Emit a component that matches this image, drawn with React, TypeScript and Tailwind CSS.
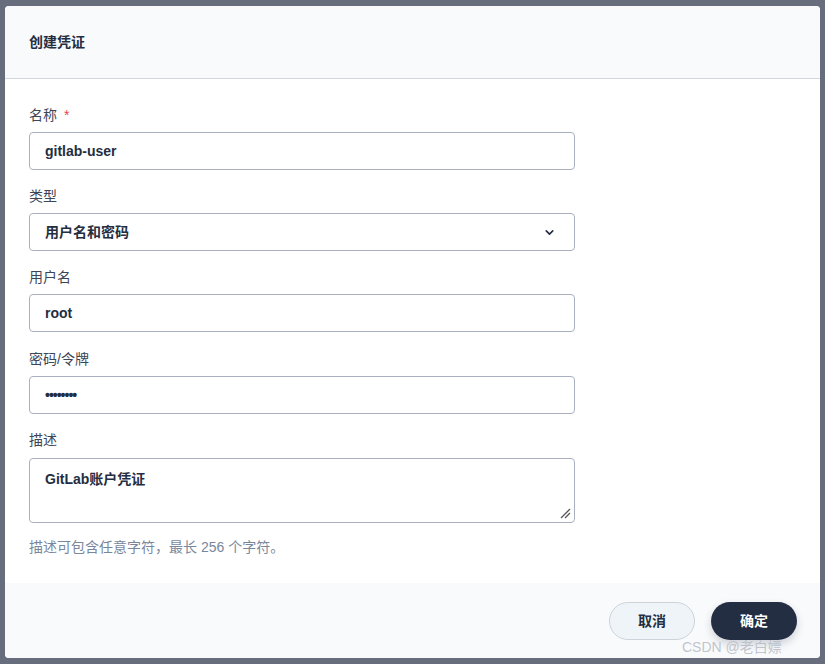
import React from 'react';

const FONT = { fontFamily: '"Liberation Sans", "Noto Sans CJK SC", sans-serif' };

const Field: React.FC<{ label: string; required?: boolean; children: React.ReactNode }> = ({
  label,
  required,
  children,
}) => (
  <div className="flex flex-col">
    <label className="h-[18px] leading-[18px] flex items-center text-[14px] text-[#3d4657] mb-[8px]">
      {label}
      {required && <span className="ml-[7px] text-[#e5484d]">*</span>}
    </label>
    {children}
  </div>
);

const inputCls =
  'h-[38px] w-[546px] rounded-[4px] border border-[#a9b1c0] bg-white px-[15px] text-[14px] font-bold text-[#242e42] flex items-center';

export default function App() {
  return (
    <div className="w-[825px] h-[664px] bg-[#676d7c] relative overflow-hidden" style={FONT}>
      <div className="absolute left-[5px] top-[6px] w-[815px] h-[652px] bg-white rounded-[4px] flex flex-col overflow-hidden">
        {/* header */}
        <div className="h-[73px] shrink-0 bg-[#f9fafc] border-b border-[#d3d8e0] flex items-center px-[24px]">
          <span className="text-[14px] font-bold text-[#242e42]">创建凭证</span>
        </div>

        {/* body */}
        <div className="flex-1 px-[24px] pt-[27px] flex flex-col gap-[17px]">
          <Field label="名称" required>
            <div className={inputCls}>gitlab-user</div>
          </Field>
          <Field label="类型">
            <div className={`${inputCls} justify-between pr-[18px]`}>
              <span>用户名和密码</span>
              <svg width="13" height="13" viewBox="0 0 24 24" fill="none" stroke="#242e42" strokeWidth={3} strokeLinecap="round" strokeLinejoin="round">
                <path d="M6 9l6 6 6-6" />
              </svg>
            </div>
          </Field>
          <Field label="用户名">
            <div className={`${inputCls} mb-[1px]`}>root</div>
          </Field>
          <Field label="密码/令牌">
            <div className={`${inputCls} tracking-[-1px] text-[11px]`}>••••••••</div>
          </Field>
          <div className="flex flex-col">
            <label className="h-[18px] leading-[18px] flex items-center text-[14px] text-[#3d4657] mb-[9px]">描述</label>
            <div className="relative h-[65px] w-[546px] rounded-[4px] border border-[#a9b1c0] bg-white px-[15px] pt-[10px] text-[14px] font-bold text-[#242e42]">
              GitLab账户凭证
              <svg className="absolute right-[3px] bottom-[3px]" width="11" height="11" viewBox="0 0 11 11" stroke="#555" strokeWidth={1.3}>
                <path d="M1 10L10 1M5 10L10 5" />
              </svg>
            </div>
            <p className="mt-[15px] leading-[18px] text-[14px] text-[#79879c]">描述可包含任意字符，最长 256 个字符。</p>
          </div>
        </div>

        {/* footer */}
        <div className="h-[75px] shrink-0 bg-[#f9fafc] flex items-center justify-end gap-[16px] pr-[23px] pt-[1px]">
          <button className="w-[86px] h-[38px] rounded-full border border-[#ccd3db] bg-[#eff4f9] text-[14px] font-bold text-[#242e42]">
            取消
          </button>
          <button className="w-[86px] h-[38px] rounded-full bg-[#242e42] text-[14px] font-bold text-white shadow-[0_4px_8px_rgba(36,46,66,0.2)]">
            确定
          </button>
        </div>
      </div>
      <span className="absolute left-[682px] top-[637px] text-[14px] text-[#b9bdc6]/90">CSDN @老白嫖</span>
    </div>
  );
}
